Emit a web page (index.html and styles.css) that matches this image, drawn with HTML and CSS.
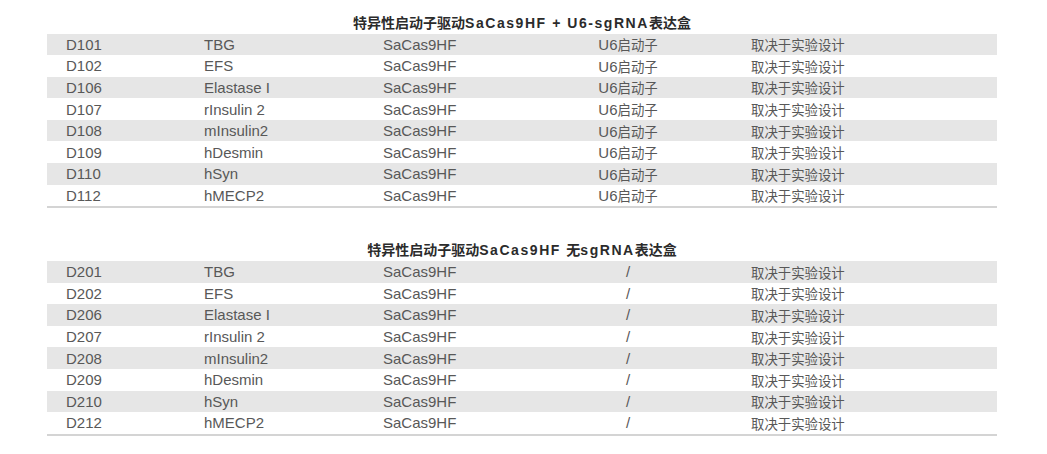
FILE: index.html
```html
<!DOCTYPE html>
<html lang="zh">
<head>
<meta charset="utf-8">
<title>SaCas9HF</title>
<link rel="stylesheet" href="styles.css">
</head>
<body>
<div class="page">
  <section class="block">
    <h2 class="title"><span class="cj">特异性启动子驱动</span><span class="lt">SaCas9HF + U6-sgRNA</span><span class="cj">表达盒</span></h2>
    <div class="table">
      <div class="row"><span>D101</span><span>TBG</span><span>SaCas9HF</span><span class="c4">U6<span class="cjk">启动子</span></span><span class="cjk">取决于实验设计</span></div>
      <div class="row"><span>D102</span><span>EFS</span><span>SaCas9HF</span><span class="c4">U6<span class="cjk">启动子</span></span><span class="cjk">取决于实验设计</span></div>
      <div class="row"><span>D106</span><span>Elastase I</span><span>SaCas9HF</span><span class="c4">U6<span class="cjk">启动子</span></span><span class="cjk">取决于实验设计</span></div>
      <div class="row"><span>D107</span><span>rInsulin 2</span><span>SaCas9HF</span><span class="c4">U6<span class="cjk">启动子</span></span><span class="cjk">取决于实验设计</span></div>
      <div class="row"><span>D108</span><span>mInsulin2</span><span>SaCas9HF</span><span class="c4">U6<span class="cjk">启动子</span></span><span class="cjk">取决于实验设计</span></div>
      <div class="row"><span>D109</span><span>hDesmin</span><span>SaCas9HF</span><span class="c4">U6<span class="cjk">启动子</span></span><span class="cjk">取决于实验设计</span></div>
      <div class="row"><span>D110</span><span>hSyn</span><span>SaCas9HF</span><span class="c4">U6<span class="cjk">启动子</span></span><span class="cjk">取决于实验设计</span></div>
      <div class="row"><span>D112</span><span>hMECP2</span><span>SaCas9HF</span><span class="c4">U6<span class="cjk">启动子</span></span><span class="cjk">取决于实验设计</span></div>
    </div>
  </section>
  <section class="block block2">
    <h2 class="title"><span class="cj">特异性启动子驱动</span><span class="lt">SaCas9HF </span><span class="cj">无</span><span class="lt">sgRNA</span><span class="cj">表达盒</span></h2>
    <div class="table">
      <div class="row"><span>D201</span><span>TBG</span><span>SaCas9HF</span><span class="c4">/</span><span class="cjk">取决于实验设计</span></div>
      <div class="row"><span>D202</span><span>EFS</span><span>SaCas9HF</span><span class="c4">/</span><span class="cjk">取决于实验设计</span></div>
      <div class="row"><span>D206</span><span>Elastase I</span><span>SaCas9HF</span><span class="c4">/</span><span class="cjk">取决于实验设计</span></div>
      <div class="row"><span>D207</span><span>rInsulin 2</span><span>SaCas9HF</span><span class="c4">/</span><span class="cjk">取决于实验设计</span></div>
      <div class="row"><span>D208</span><span>mInsulin2</span><span>SaCas9HF</span><span class="c4">/</span><span class="cjk">取决于实验设计</span></div>
      <div class="row"><span>D209</span><span>hDesmin</span><span>SaCas9HF</span><span class="c4">/</span><span class="cjk">取决于实验设计</span></div>
      <div class="row"><span>D210</span><span>hSyn</span><span>SaCas9HF</span><span class="c4">/</span><span class="cjk">取决于实验设计</span></div>
      <div class="row"><span>D212</span><span>hMECP2</span><span>SaCas9HF</span><span class="c4">/</span><span class="cjk">取决于实验设计</span></div>
    </div>
  </section>
</div>
</body>
</html>
```

FILE: styles.css
```css
html, body {
  margin: 0;
  padding: 0;
  background: #ffffff;
}

.page {
  width: 950px;
  margin-left: 47px;
  padding-top: 10.5px;
  font-family: "Liberation Sans", Arial, "Noto Sans CJK SC", sans-serif;
}

.block2 {
  margin-top: 29.7px;
}

.title {
  margin: 0;
  height: 23px;
  line-height: 23px;
  text-align: center;
  font-size: 14px;
  font-weight: bold;
  color: #2b2b2b;
  white-space: nowrap;
}

.title .cj {
  font-family: "Noto Sans CJK SC", sans-serif;
  font-size: 14px;
}

.title .lt {
  font-family: "Liberation Sans", Arial, sans-serif;
  letter-spacing: 1.55px;
}

.table {
  border-bottom: 2px solid #d4d4d4;
}

.row {
  display: grid;
  grid-template-columns: 138px 179px 122px 246px 1fr;
  align-items: center;
  height: 21.6px;
  padding-left: 19px;
  font-size: 15px;
  color: #585858;
  white-space: nowrap;
}

.row:nth-child(odd) {
  background: #e6e6e6;
}

.row .c4 {
  text-align: center;
}

.cjk {
  font-family: "Noto Sans CJK SC", sans-serif;
  font-size: 13.4px;
}
```
